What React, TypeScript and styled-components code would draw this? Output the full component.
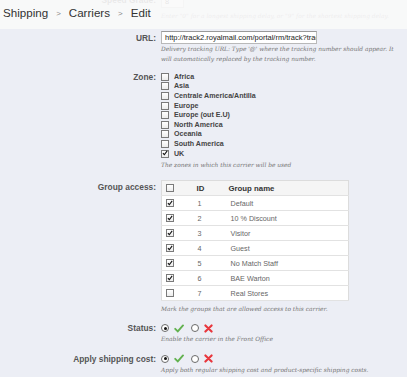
import React from 'react';
import styled, {createGlobalStyle} from 'styled-components';

const GlobalStyle = createGlobalStyle`
  html, body {
    margin: 0;
    padding: 0;
    background: #eceef5;
  }
  body {
    width: 407px;
    height: 377px;
    overflow: hidden;
    font-family: "Liberation Sans", Arial, sans-serif;
  }
`;

const zones = [
    {name: 'Africa', checked: false},
    {name: 'Asia', checked: false},
    {name: 'Centrale America/Antilla', checked: false},
    {name: 'Europe', checked: false},
    {name: 'Europe (out E.U)', checked: false},
    {name: 'North America', checked: false},
    {name: 'Oceania', checked: false},
    {name: 'South America', checked: false},
    {name: 'UK', checked: true},
];

const groups = [
    {id: 1, name: 'Default', checked: true},
    {id: 2, name: '10 % Discount', checked: true},
    {id: 3, name: 'Visitor', checked: true},
    {id: 4, name: 'Guest', checked: true},
    {id: 5, name: 'No Match Staff', checked: true},
    {id: 6, name: 'BAE Warton', checked: true},
    {id: 7, name: 'Real Stores', checked: false},
];


/**
 * 勾選框
 */
const CheckBox = ({checked}: {checked?: boolean}) => {
    return <Box>
        {checked && <svg width="8" height="8" viewBox="0 0 8 8">
            <path d="M1.2 4.2 L3.1 6.3 L6.9 1.2" fill="none" stroke="#111" strokeWidth="1.5"/>
        </svg>}
    </Box>;
};

const YesIcon = () => (
    <svg width="10" height="9" viewBox="0 0 10 9">
        <path d="M1.2 4.8 L3.8 7.4 L9 1.4" fill="none" stroke="#62b14f" strokeWidth="1.9" strokeLinecap="round"/>
    </svg>
);

const NoIcon = () => (
    <svg width="9" height="9" viewBox="0 0 9 9">
        <path d="M1.4 1.4 L7.6 7.6 M7.6 1.4 L1.4 7.6" fill="none" stroke="#e8363c" strokeWidth="2.1" strokeLinecap="round"/>
    </svg>
);

const Toggle = ({on}: {on: boolean}) => {
    return <ToggleRow>
        <Radio $selected={on}/>
        <YesIcon/>
        <Radio $selected={!on} className="ml"/>
        <NoIcon/>
    </ToggleRow>;
};


const App = () => {

    const renderZones = () => {
        return <ZoneList>
            {zones.map(zone => (
                <ZoneItem key={zone.name}>
                    <CheckBox checked={zone.checked}/>
                    <span>{zone.name}</span>
                </ZoneItem>
            ))}
        </ZoneList>;
    };

    const renderGroups = () => {
        return <GroupTable>
            <thead>
                <tr>
                    <th><CheckBox/></th>
                    <th>ID</th>
                    <th>Group name</th>
                </tr>
            </thead>
            <tbody>
                {groups.map(group => (
                    <tr key={group.id}>
                        <td><CheckBox checked={group.checked}/></td>
                        <td>{group.id}</td>
                        <td>{group.name}</td>
                    </tr>
                ))}
            </tbody>
        </GroupTable>;
    };

    return (
        <>
            <GlobalStyle/>
            <PageRoot>
                <Form>
                    <FormRow $gap={0}>
                        <Label>Speed Grade:</Label>
                        <Field>
                            <SmallInput>8</SmallInput>
                            <Help $gap={3}>Enter &quot;0&quot; for a longest shipping delay, or &quot;9&quot; for the shortest shipping delay.</Help>
                        </Field>
                    </FormRow>

                    <FormRow $gap={10}>
                        <Label $pad={2}>URL:</Label>
                        <Field>
                            <TextInput>http://track2.royalmail.com/portal/rm/track?trackNumber=@</TextInput>
                            <Help $gap={0}>Delivery tracking URL: Type &apos;@&apos; where the tracking number should appear. It will automatically replaced by the tracking number.</Help>
                        </Field>
                    </FormRow>

                    <FormRow $gap={8}>
                        <Label>Zone:</Label>
                        <Field>
                            {renderZones()}
                            <Help $gap={2}>The zones in which this carrier will be used</Help>
                        </Field>
                    </FormRow>

                    <FormRow $gap={10}>
                        <Label $pad={2}>Group access:</Label>
                        <Field>
                            {renderGroups()}
                            <Help $gap={3}>Mark the groups that are allowed access to this carrier.</Help>
                        </Field>
                    </FormRow>

                    <FormRow $gap={9}>
                        <Label>Status:</Label>
                        <Field>
                            <Toggle on/>
                            <Help $gap={1}>Enable the carrier in the Front Office</Help>
                        </Field>
                    </FormRow>

                    <FormRow $gap={9.5}>
                        <Label>Apply shipping cost:</Label>
                        <Field>
                            <Toggle on/>
                            <Help $gap={1}>Apply both regular shipping cost and product-specific shipping costs.</Help>
                        </Field>
                    </FormRow>
                </Form>

                {/* 固定頁首 */}
                <Toolbar>
                    <Crumb>Shipping</Crumb>
                    <Sep>&gt;</Sep>
                    <Crumb>Carriers</Crumb>
                    <Sep>&gt;</Sep>
                    <Crumb>Edit</Crumb>
                </Toolbar>
            </PageRoot>
        </>
    );
};

export default App;




const PageRoot = styled.div`
    position: relative;
    width: 407px;
    height: 377px;
    overflow: hidden;
    background: #eceef5;
`;

const Toolbar = styled.div`
    position: absolute;
    top: 0;
    left: 0;
    right: 0;
    height: 29px;
    display: flex;
    align-items: center;
    padding: 0 0 4px 3px;
    box-sizing: border-box;
    background: rgba(249, 249, 249, 0.9);
`;

const Crumb = styled.span`
    font-size: 11.6px;
    color: #333;
`;

const Sep = styled.span`
    font-size: 8px;
    color: #888;
    margin: 1px 8px 0 8px;
`;

const Form = styled.div`
    display: flex;
    flex-direction: column;
    margin-top: -5px;
`;

const FormRow = styled.div<{$gap: number}>`
    display: grid;
    grid-template-columns: 156px 1fr;
    column-gap: 5px;
    margin-top: ${p => p.$gap}px;
`;

const Label = styled.div<{$pad?: number}>`
    text-align: right;
    font-size: 8.4px;
    font-weight: bold;
    color: #555;
    line-height: 10px;
    padding-top: ${p => p.$pad || 0}px;
`;

const Field = styled.div`
    display: flex;
    flex-direction: column;
    min-width: 0;
`;

const Help = styled.div<{$gap: number}>`
    font-family: "DejaVu Serif", Georgia, serif;
    font-style: italic;
    font-size: 5.9px;
    line-height: 10px;
    color: #747474;
    margin-top: ${p => p.$gap}px;
    padding-right: 4px;
`;

const SmallInput = styled.div`
    width: 23px;
    height: 13px;
    box-sizing: border-box;
    border: 1px solid #ccc;
    background: #fff;
    font-size: 7.5px;
    line-height: 11px;
    padding-left: 3px;
    color: #333;
`;

const TextInput = styled.div`
    width: 156px;
    height: 13px;
    box-sizing: border-box;
    border: 1px solid #b9b9b9;
    border-top-color: #999;
    background: #fff;
    font-size: 7.5px;
    line-height: 11px;
    padding-left: 3px;
    color: #222;
    white-space: nowrap;
    overflow: hidden;
`;

const ZoneList = styled.div`
    display: flex;
    flex-direction: column;
`;

const ZoneItem = styled.div`
    display: flex;
    align-items: center;
    gap: 5px;
    height: 9.6px;
    font-size: 7.1px;
    font-weight: bold;
    color: #444;
`;

const Box = styled.span`
    display: inline-flex;
    align-items: center;
    justify-content: center;
    width: 8px;
    height: 8px;
    box-sizing: border-box;
    border: 1px solid #7a7a7a;
    background: linear-gradient(#fff, #ececec);
    flex-shrink: 0;

    svg {
        margin-top: -1px;
    }
`;

const GroupTable = styled.table`
    width: 188px;
    border-collapse: collapse;
    background: #fff;
    border: 1px solid #dcdcdc;

    th, td {
        height: 15px;
        padding: 0;
        text-align: left;
        border-bottom: 1px solid #e2e2e2;
        box-sizing: border-box;
    }

    th {
        background: #f5f5f5;
        font-size: 7.8px;
        font-weight: bold;
        color: #333;
    }

    td {
        font-size: 7.2px;
        color: #666;
    }

    th:first-child, td:first-child {
        width: 35px;
        padding-left: 4px;
        line-height: 0;
    }

    th:nth-child(2), td:nth-child(2) {
        width: 32px;
    }

    td:nth-child(2) {
        padding-left: 1px;
    }

    td:nth-child(3) {
        padding-left: 2px;
    }
`;

const ToggleRow = styled.div`
    display: flex;
    align-items: center;
    height: 10px;
    gap: 5px;

    .ml {
        margin-left: 2px;
    }
`;

const Radio = styled.span<{$selected: boolean}>`
    position: relative;
    width: 8px;
    height: 8px;
    box-sizing: border-box;
    border-radius: 50%;
    border: 1px solid #6a6a6a;
    background: #fff;

    &::after {
        content: '';
        display: ${p => p.$selected ? 'block' : 'none'};
        position: absolute;
        left: 1.5px;
        top: 1.5px;
        width: 3px;
        height: 3px;
        border-radius: 50%;
        background: #111;
    }
`;
